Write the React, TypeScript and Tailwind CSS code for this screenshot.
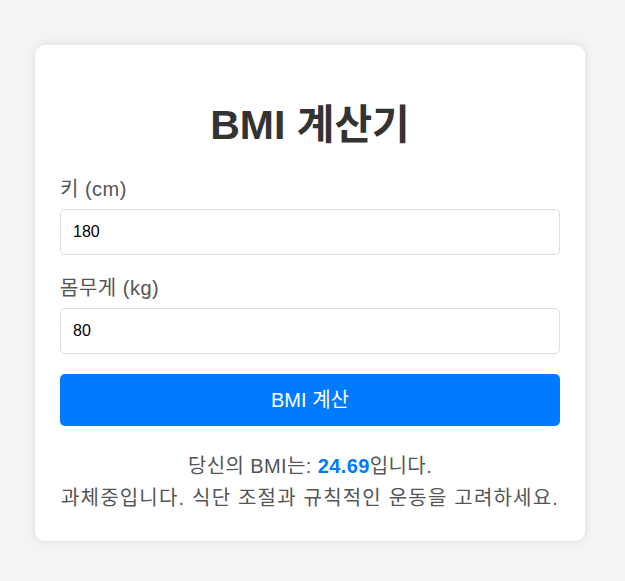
import { useState } from 'react';

const FONT = "font-['Liberation_Sans','Noto_Sans_CJK_KR',sans-serif]";

export default function App() {
  const [height, setHeight] = useState('180');
  const [weight, setWeight] = useState('80');
  const [bmi, setBmi] = useState<number | null>(24.69);

  const calc = () => {
    const h = parseFloat(height) / 100;
    const w = parseFloat(weight);
    if (!h || !w) return;
    setBmi(Math.round((w / (h * h)) * 100) / 100);
  };

  return (
    <div className={`min-h-[581px] bg-[#f4f4f4] pt-[45px] px-[35px] ${FONT}`}>
      <div className="w-[550px] rounded-[10px] bg-white px-[25px] pt-[25px] pb-[27px] shadow-[0_0_10px_rgba(0,0,0,0.1)]">
        <h1 className="mt-[32px] mb-[28px] text-center text-[41px] font-bold leading-[46px] text-[#333]">BMI 계산기</h1>

        <div className="mb-[20px]">
          <label className="mb-[7px] block pt-[1px] text-[20px] leading-[25px] tracking-[0.5px] text-[#555]">키 (cm)</label>
          <input
            value={height}
            onChange={(e) => setHeight(e.target.value)}
            className="block h-[46px] w-full rounded-[5px] border border-[#ddd] px-[12px] text-[16px] text-black outline-none"
          />
        </div>

        <div className="mb-[20px]">
          <label className="mb-[7px] block pt-[1px] text-[20px] leading-[25px] tracking-[0.5px] text-[#555]">몸무게 (kg)</label>
          <input
            value={weight}
            onChange={(e) => setWeight(e.target.value)}
            className="block h-[46px] w-full rounded-[5px] border border-[#ddd] px-[12px] text-[16px] text-black outline-none"
          />
        </div>

        <button
          onClick={calc}
          className="block h-[52px] w-full rounded-[5px] bg-[#007bff] text-[20px] text-white"
        >
          BMI 계산
        </button>

        {bmi !== null && (
          <div className="mt-[24px] text-center text-[20px] leading-[32px] text-[#555]">
            <p className="tracking-[0.4px]">당신의 BMI는: <span className="font-bold text-[#007bff]">{bmi}</span>입니다.</p>
            <p className="tracking-[1.2px]">과체중입니다. 식단 조절과 규칙적인 운동을 고려하세요.</p>
          </div>
        )}
      </div>
    </div>
  );
}
